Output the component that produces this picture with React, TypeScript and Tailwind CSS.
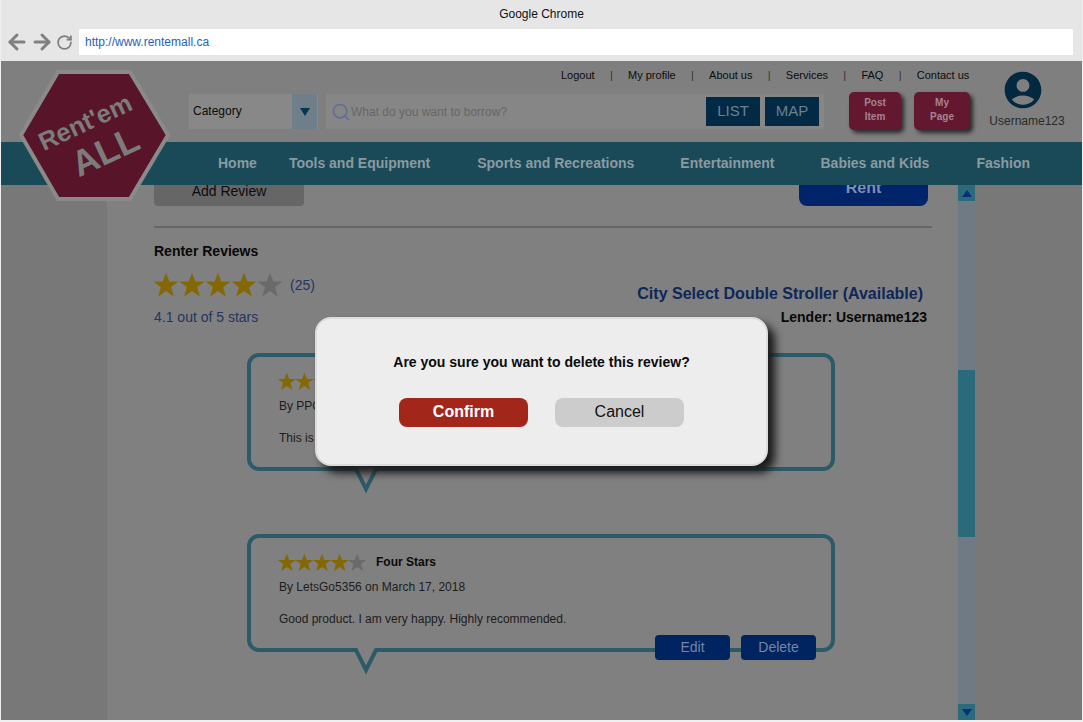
import { ArrowLeft, ArrowRight, RotateCw, Search } from "lucide-react";
import { MdAccountCircle } from "react-icons/md";

const topLinks = ["Logout", "My profile", "About us", "Services", "FAQ", "Contact us"];

const navLinks = [
  { label: "Home", className: "ml-[217px]" },
  { label: "Tools and Equipment", className: "ml-[32px]" },
  { label: "Sports and Recreations", className: "ml-[47px]" },
  { label: "Entertainment", className: "ml-[46px]" },
  { label: "Babies and Kids", className: "ml-[46px]" },
  { label: "Fashion", className: "ml-[47px]" },
];

const StarRow = ({ size, pitch }: { size: number; pitch: number }) => (
  <svg width={pitch * 5} height={size} viewBox={`0 0 ${pitch * 5} ${size}`} className="block shrink-0">
    {[0, 1, 2, 3, 4].map((i) => (
      <g key={i} transform={`translate(${i * pitch + (pitch - size) / 2} 0) scale(${size / 24})`}>
        <path
          d="M12 0.8l3.1 8h8.4l-6.8 5.2 2.6 8.8L12 17.6l-7.3 5.2 2.6-8.8L0.5 8.8h8.4z"
          fill={i < 4 ? "#846806" : "#6a6a6a"}
        />
      </g>
    ))}
  </svg>
);

const ReviewCard = ({
  title,
  byline,
  body,
  actions,
  className,
}: {
  title: string;
  byline: string;
  body: string;
  actions?: boolean;
  className?: string;
}) => (
  <div className={`relative ml-[93px] h-[118px] w-[588px] rounded-[12px] border-[4px] border-[#2c5a68] pl-[28px] pt-[14px] ${className ?? ""}`}>
    <div className="flex h-[20px] items-center">
      <div className="-ml-[1px]">
        <StarRow size={19} pitch={17.6} />
      </div>
      <span className="ml-[10px] text-[12px] font-bold text-[#0a0a0a]">{title}</span>
    </div>
    <p className="mt-[7px] text-[12px] leading-[16px] text-[#1c1c1c]">{byline}</p>
    <p className="mt-[16px] text-[12px] leading-[16px] text-[#1c1c1c]">{body}</p>
    {actions && (
      <div className="absolute -bottom-[4px] right-[15px] flex translate-y-[8px] gap-[11px]">
        <button className="h-[25px] w-[75px] rounded-[4px] bg-[#00245f] text-[14px] text-[#7485a8]">Edit</button>
        <button className="h-[25px] w-[75px] rounded-[4px] bg-[#00245f] text-[14px] text-[#7485a8]">Delete</button>
      </div>
    )}
    <svg width="26" height="28" viewBox="0 0 26 28" className="absolute -bottom-[28px] left-[102px]">
      <polygon points="2,0 24,0 13,22" fill="#808080" />
      <polyline points="2,0 13,22 24,0" fill="none" stroke="#2c5a68" strokeWidth="4" />
    </svg>
  </div>
);

export default function App() {
  return (
    <div className="relative h-[722px] w-[1083px] overflow-hidden bg-[#f0f0f0] px-[1px] pb-[2px] font-['Liberation_Sans',Arial,sans-serif]">
      {/* browser chrome */}
      <div className="h-[61px] bg-[#e6e6e6]">
        <div className="pt-[7px] text-center text-[12px] leading-[14px] text-[#111]">Google Chrome</div>
        <div className="mt-[8px] flex items-center">
          <div className="flex w-[78px] items-center pl-[4px] text-[#808080]">
            <ArrowLeft size={24} strokeWidth={3} />
            <ArrowRight size={24} strokeWidth={3} className="ml-[1px]" />
            <RotateCw size={17} strokeWidth={2.5} className="ml-[2px]" />
          </div>
          <div className="flex h-[26px] w-[994px] items-center bg-white pl-[6px] text-[12px] text-[#1f62b8]">
            http://www.rentemall.ca
          </div>
        </div>
      </div>

      {/* page, dimmed behind the dialog */}
      <div className="relative h-[659px] bg-[#787878]">
        <div className="h-[81px] bg-[#7f7f7f]">
          <div className="flex h-[29px] items-center gap-[15.25px] pb-[1px] pl-[560px] text-[11px] text-[#0c0c0c]">
            {topLinks.map((link, i) => (
              <div key={link} className="flex items-center gap-[15.25px]">
                {i > 0 && <span className="text-[#333]">|</span>}
                <span>{link}</span>
              </div>
            ))}
          </div>
          <div className="flex items-start">
            <div className="ml-[188px] mt-[4px] flex h-[35px] w-[129px] bg-[#888]">
              <div className="flex w-[103px] items-center pb-[2px] pl-[4px] text-[12px] text-[#0c0c0c]">Category</div>
              <div className="flex w-[25px] items-center justify-center bg-[#6e7f8a]">
                <div className="h-0 w-0 border-x-[5px] border-t-[8px] border-x-transparent border-t-[#06364f]" />
              </div>
            </div>
            <div className="ml-[8px] mt-[4px] flex h-[35px] w-[498px] items-center bg-[#868686] pl-[5px] pr-[5px]">
              <Search size={20} strokeWidth={2} className="text-[#5f6f96]" />
              <span className="whitespace-nowrap text-[12px] text-[#666]">What do you want to borrow?</span>
              <button className="ml-auto h-[29px] w-[54px] bg-[#022a44] text-[15px] text-[#6d8190]">LIST</button>
              <button className="ml-[5px] h-[29px] w-[54px] bg-[#022a44] text-[15px] text-[#6d8190]">MAP</button>
            </div>
            <button className="ml-[25px] mt-[2px] h-[38px] w-[52px] rounded-[5px] bg-[#631830] pb-[2px] text-[10px] font-bold leading-[14px] text-[#a5848f] shadow-[3px_3px_4px_#2a2a2a]">
              Post
              <br />
              Item
            </button>
            <button className="ml-[13px] mt-[2px] h-[38px] w-[56px] rounded-[5px] bg-[#631830] pb-[2px] text-[10px] font-bold leading-[14px] text-[#a5848f] shadow-[3px_3px_4px_#2a2a2a]">
              My
              <br />
              Page
            </button>
            <div className="-mt-[22px] ml-[19px] flex w-[76px] flex-col items-center">
              <MdAccountCircle size={44} className="mr-[8px] text-[#02293f]" />
              <span className="mt-[2px] whitespace-nowrap text-[12px] leading-[14px] text-[#2a2a2a]">Username123</span>
            </div>
          </div>
        </div>

        <nav className="flex h-[43px] items-center bg-[#1a4a58] text-[14px] font-bold text-[#8a9aa0]">
          {navLinks.map((item) => (
            <span key={item.label} className={item.className}>
              {item.label}
            </span>
          ))}
        </nav>

        {/* logo sits over the header and nav */}
        <div className="absolute left-[15px] top-[4px] h-[140px] w-[158px]">
          <svg width="158" height="140" viewBox="0 0 158 140">
            <polygon points="42,7 114,7 152,70 114,134 42,134 5,70" fill="#581428" stroke="#8a8a8a" strokeWidth="4" />
            <text x="69" y="66" transform="rotate(-25 69 57)" textAnchor="middle" fontSize="25.5" fontWeight="700" fill="#7c7c7c">
              Rent'em
            </text>
            <text x="89" y="99" transform="rotate(-25 89 86)" textAnchor="middle" fontSize="36" fontWeight="700" fill="#7c7c7c">
              ALL
            </text>
          </svg>
        </div>

        {/* scroll area */}
        <div className="flex h-[535px] overflow-hidden">
          <div className="w-[106px]" />
          <div className="w-[851px] bg-[#808080] pl-[47px] pr-[26px]">
            <div className="-mt-[15px] flex items-end justify-between pr-[4px]">
              <button className="h-[31px] w-[150px] rounded-b-[4px] bg-[#666] pt-[2px] text-[14px] text-[#0c0c0c]">Add Review</button>
              <button className="h-[36px] w-[129px] rounded-[8px] bg-[#00246a] text-[16px] font-bold text-[#7f8fb4]">Rent</button>
            </div>
            <div className="mt-[20px] h-[2px] bg-[#666]" />
            <div className="mt-[13px] flex items-end justify-between">
              <div>
                <div className="text-[14px] font-bold leading-[20px] text-[#080808]">Renter Reviews</div>
                <div className="mt-[10px] flex h-[28px] items-center">
                  <div className="-ml-[1px]">
                    <StarRow size={26} pitch={26} />
                  </div>
                  <span className="ml-[7px] text-[14px] text-[#24365f]">(25)</span>
                </div>
                <div className="mt-[8px] text-[14px] leading-[20px] text-[#24365f]">4.1 out of 5 stars</div>
              </div>
              <div className="flex flex-col items-end pr-[5px]">
                <div className="pr-[4px] text-[16px] font-bold leading-[20px] text-[#0f2658]">
                  City Select Double Stroller (Available)
                </div>
                <div className="mt-[3px] text-[14px] font-bold leading-[20px] text-[#080808]">Lender: Username123</div>
              </div>
            </div>
            <ReviewCard title="Five Stars" byline="By PPG on March 20, 2018" body="This is great." className="mt-[26px]" />
            <ReviewCard
              title="Four Stars"
              byline="By LetsGo5356 on March 17, 2018"
              body="Good product. I am very happy. Highly recommended."
              actions
              className="mt-[63px]"
            />
          </div>
          <div className="flex w-[17px] flex-col bg-[#6f7a85]">
            <div className="flex h-[16px] items-center justify-center bg-[#2a6a7a]">
              <div className="h-0 w-0 border-x-[5px] border-b-[7px] border-x-transparent border-b-[#06307a]" />
            </div>
            <div className="mt-[169px] h-[167px] bg-[#2a6a7a]" />
            <div className="mt-auto flex h-[16px] items-center justify-center bg-[#2a6a7a]">
              <div className="h-0 w-0 border-x-[5px] border-t-[7px] border-x-transparent border-t-[#06307a]" />
            </div>
          </div>
          <div className="w-[106px]" />
        </div>

        {/* confirm dialog */}
        <div className="absolute left-[314px] top-[256px] flex h-[149px] w-[453px] flex-col items-center rounded-[16px] border-2 border-[#dcdcdc] bg-[#ededed] pt-[33px] shadow-[7px_7px_9px_#1a1a1a]">
          <p className="text-[14px] font-bold leading-[20px] text-[#0a0a0a]">
            Are you sure you want to delete this review?
          </p>
          <div className="mt-[26px] flex gap-[27px]">
            <button className="h-[29px] w-[129px] rounded-[8px] bg-[#a3261b] pb-[2px] text-[16px] font-bold text-white">Confirm</button>
            <button className="h-[29px] w-[129px] rounded-[8px] bg-[#cccccc] pb-[2px] text-[16px] text-[#111]">Cancel</button>
          </div>
        </div>
      </div>
    </div>
  );
}
